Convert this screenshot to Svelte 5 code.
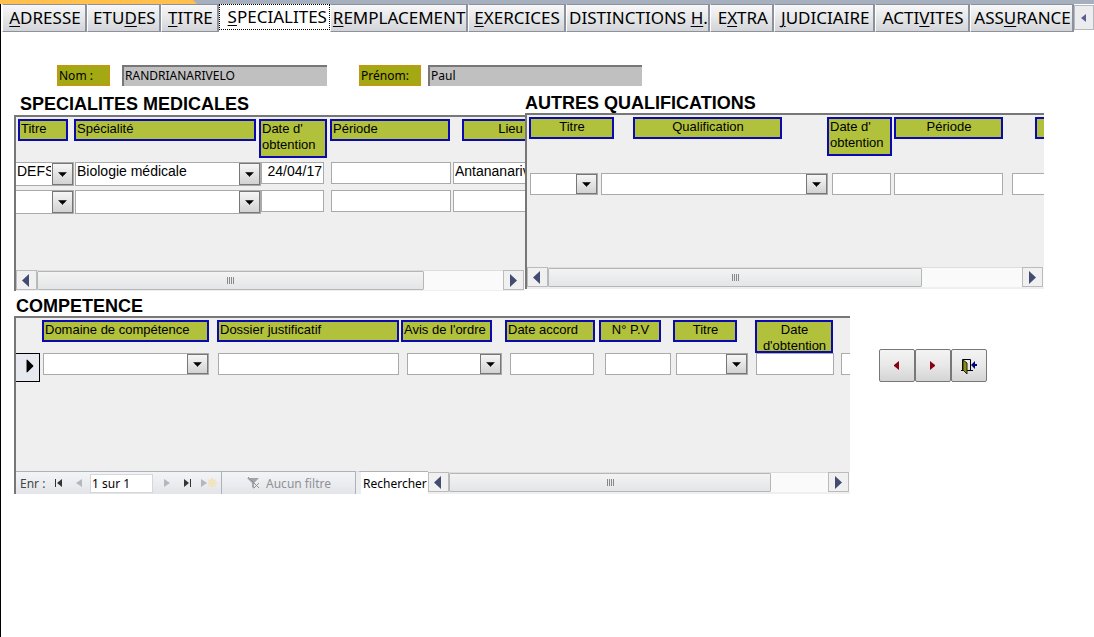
<script>
  // Tab captions: the character at index `key` is the keyboard mnemonic.
  const tabs = [
    { text: 'ADRESSE', key: 0, w: 85 },
    { text: 'ETUDES', key: 3, w: 74 },
    { text: 'TITRE', key: 0, w: 58 },
    { text: 'SPECIALITES', key: 0, w: 111 },
    { text: 'REMPLACEMENT', key: 0, w: 138 },
    { text: 'EXERCICES', key: 0, w: 98 },
    { text: 'DISTINCTIONS H.', key: 13, w: 145 },
    { text: 'EXTRA', key: 1, w: 64 },
    { text: 'JUDICIAIRE', key: 0, w: 101 },
    { text: 'ACTIVITES', key: 4, w: 95 },
    { text: 'ASSURANCE', key: 3, w: 104 }
  ];
  let active = $state(3);

  // w is the width of a box, gap the room left before it.
  const specialites = {
    id: 'spec',
    heads: [
      { text: 'Titre', w: 50, gap: 2 },
      { text: 'Spécialité', w: 182, gap: 6 },
      { text: "Date d' obtention", w: 68, gap: 3, tall: true },
      { text: 'Période', w: 120, gap: 3 },
      { text: 'Lieu', w: 96, gap: 12, center: true }
    ],
    rows: [
      [
        { label: 'Titre', value: 'DEFS', combo: true, w: 58, gap: 0, open: true },
        { label: 'Spécialité', value: 'Biologie médicale', combo: true, w: 186, gap: 1 },
        { label: "Date d'obtention", value: '24/04/17', w: 63, gap: 0, right: true },
        { label: 'Période', value: '', w: 120, gap: 7 },
        { label: 'Lieu', value: 'Antananarivo', w: 110, gap: 2 }
      ],
      [
        { label: 'Titre', value: '', combo: true, w: 58, gap: 0, open: true },
        { label: 'Spécialité', value: '', combo: true, w: 186, gap: 1 },
        { label: "Date d'obtention", value: '', w: 63, gap: 0 },
        { label: 'Période', value: '', w: 120, gap: 7 },
        { label: 'Lieu', value: '', w: 110, gap: 2 }
      ]
    ]
  };
  const qualifications = {
    id: 'qual',
    heads: [
      { text: 'Titre', w: 85, gap: 2, center: true },
      { text: 'Qualification', w: 149, gap: 19, center: true },
      { text: "Date d' obtention", w: 65, gap: 45, tall: true },
      { text: 'Période', w: 109, gap: 2, center: true },
      { text: '', w: 80, gap: 32 }
    ],
    rows: [
      [
        { label: 'Titre', value: '', combo: true, w: 68, gap: 3 },
        { label: 'Qualification', value: '', combo: true, w: 227, gap: 3 },
        { label: "Date d'obtention", value: '', w: 59, gap: 4 },
        { label: 'Période', value: '', w: 109, gap: 3 },
        { label: 'Lieu', value: '', w: 90, gap: 9 }
      ]
    ]
  };
  const competence = {
    id: 'comp',
    heads: [
      { text: 'Domaine de compétence', w: 167, gap: 26 },
      { text: 'Dossier justificatif', w: 182, gap: 8 },
      { text: "Avis de l'ordre", w: 91, gap: 2 },
      { text: 'Date accord', w: 90, gap: 13 },
      { text: 'N° P.V', w: 62, gap: 4, center: true },
      { text: 'Titre', w: 64, gap: 12, center: true },
      { text: "Date d'obtention", w: 78, gap: 18, center: true, tall: true }
    ],
    rows: [
      [
        { label: 'Domaine de compétence', value: '', combo: true, w: 166, gap: 3 },
        { label: 'Dossier justificatif', value: '', w: 181, gap: 9 },
        { label: "Avis de l'ordre", value: '', combo: true, w: 95, gap: 8 },
        { label: 'Date accord', value: '', w: 84, gap: 8 },
        { label: 'N° P.V', value: '', w: 66, gap: 11 },
        { label: 'Titre', value: '', combo: true, w: 72, gap: 5 },
        { label: "Date d'obtention", value: '', w: 78, gap: 8 },
        { label: 'Lieu', value: '', w: 80, gap: 7 }
      ]
    ]
  };
</script>

{#snippet box(c)}
  {#if c.combo}
    <span class="combo" class:open={c.open}>
      <select aria-label={c.label}>
        <option>{c.value}</option>
      </select>
      <svg class="drop" viewBox="0 0 21 20" aria-hidden="true"><path d="M6 8h9v1h-1v1h-1v1h-1v1h-1v1h-1v-1h-1v-1h-1v-1h-1v-1h-1z" /></svg>
    </span>
  {:else}
    <input class="field" class:right={c.right} type="text" aria-label={c.label} value={c.value} />
  {/if}
{/snippet}

{#snippet sheet(s)}
  <table class="sheet {s.id}">
    <thead>
      <tr>
        {#each s.heads as h}
          <th
            class:center={h.center}
            class:tall={h.tall}
            style="width:{h.w}px;margin-left:{h.gap}px">{h.text}</th>
        {/each}
      </tr>
    </thead>
    <tbody>
      {#each s.rows as row}
        <tr>
          {#if s.id === 'comp'}
            <td class="selector">
              <button aria-label="Enregistrement actif">
                <svg viewBox="0 0 24 27"><path d="M11 5h1l1 1 1 1 4 4v1l-4 4-2 2h-1z" /></svg>
              </button>
            </td>
          {/if}
          {#each row as c}
            <td style="width:{c.w}px;margin-left:{c.gap}px">{@render box(c)}</td>
          {/each}
        </tr>
      {/each}
    </tbody>
  </table>
{/snippet}

{#snippet scroller(size)}
  <div class="scroller">
    <button class="arrow" aria-label="Défiler à gauche">
      <svg viewBox="0 0 19 17"><path d="M12 2v13L5 8.500z" /></svg>
    </button>
    <div class="track">
      <div class="thumb" style="width:{size}%"><i></i><i></i><i></i><i></i></div>
    </div>
    <button class="arrow" aria-label="Défiler à droite">
      <svg viewBox="0 0 19 17"><path d="M6 2v13l7-6.500z" /></svg>
    </button>
  </div>
{/snippet}

<div class="strip"><div class="accent"></div></div>
<div class="page">
  <nav class="tabs" role="tablist">
    {#each tabs as t, i}
      <button
        class="tab"
        class:active={active === i}
        role="tab"
        aria-selected={active === i}
        style="flex:1 1 {t.w}px"
        onclick={() => (active = i)}>{t.text.slice(0, t.key)}<u>{t.text[t.key]}</u>{t.text.slice(t.key + 1)}</button>
    {/each}
    <button class="more" aria-label="Onglets précédents">
      <svg viewBox="0 0 6 8"><path d="M5 0v8L0 4z" /></svg>
    </button>
  </nav>

  <form class="person" onsubmit={(e) => e.preventDefault()}>
    <label for="nom">Nom :</label>
    <input id="nom" type="text" value="RANDRIANARIVELO" readonly />
    <label class="second" for="prenom">Prénom:</label>
    <input id="prenom" type="text" value="Paul" readonly />
  </form>

  <div class="pair">
    <section class="left">
      <h2>SPECIALITES MEDICALES</h2>
      <div class="panel">
        {@render sheet(specialites)}
        {@render scroller(83)}
      </div>
    </section>
    <section>
      <h2>AUTRES QUALIFICATIONS</h2>
      <div class="panel">
        {@render sheet(qualifications)}
        {@render scroller(79)}
      </div>
    </section>
  </div>

  <div class="lower">
    <section class="wide">
      <h2>COMPETENCE</h2>
      <div class="panel">
        {@render sheet(competence)}
        <div class="foot">
          <div class="records">
            <span class="enr">Enr :</span>
            <button aria-label="Premier"><svg viewBox="0 0 10 10"><path d="M1 1h1v8H1zM8 1v8L3 5z" /></svg></button>
            <button class="dim" aria-label="Précédent"><svg viewBox="0 0 10 10"><path d="M7 1v8L1 5z" /></svg></button>
            <input class="pos" type="text" aria-label="Enregistrement" value="1 sur 1" />
            <button class="dim" aria-label="Suivant"><svg viewBox="0 0 10 10"><path d="M2 1v8l6-4z" /></svg></button>
            <button aria-label="Dernier"><svg viewBox="0 0 10 10"><path d="M1 1v8l5-4zM7 1h1v8H7z" /></svg></button>
            <button class="dim new" aria-label="Nouveau"><svg viewBox="0 0 16 10"><path d="M0 1v8l6-4z" /><path class="spark" d="M10 0h2v2l2-1 1 1-1 2h2v2h-2l1 2-1 1-2-1v2h-2V8L8 9 7 8l1-2H7V4h1L7 2l1-1 2 1z" /></svg></button>
          </div>
          <button class="filter" disabled>
            <svg viewBox="0 0 14 14"><path d="M1 2h12L8 7v6L6 11V7z" /><path class="cross" d="M2 1l11 11M13 7l-5 5" /></svg>
            Aucun filtre
          </button>
          <input class="find" type="text" aria-label="Rechercher" value="Rechercher" />
          {@render scroller(85)}
        </div>
      </div>
    </section>
    <div class="actions">
      <button aria-label="Fiche précédente"><svg viewBox="0 0 20 20"><path class="red" d="M12 5v9L7 10V9z" /></svg></button>
      <button aria-label="Fiche suivante"><svg viewBox="0 0 20 20"><path class="red" d="M7 5v9l5-4V9z" /></svg></button>
      <button aria-label="Fermer">
        <svg viewBox="0 0 20 20">
          <path d="M3.500 14V3.500h8V14.500M2 14.500h3M8 14.500h6" fill="none" stroke="#000" />
          <path d="M4 4l4 3v11l-4-4z" fill="#8c8c1c" stroke="#222200" />
          <path class="blue" d="M12 9l4-4v3h2v2h-2v3z" />
        </svg>
      </button>
    </div>
  </div>
</div>

<style>
  :global(body) {
    background: #fff;
    color: #000;
    font-family: 'Liberation Sans', Arial, sans-serif;
    font-size: 14px;
  }
  :global(*) {
    box-sizing: border-box;
  }
  button,
  input,
  select {
    margin: 0;
    padding: 0;
    border: 0;
    border-radius: 0;
    font: inherit;
    color: inherit;
    min-width: 0;
  }
  svg {
    display: block;
  }

  .strip {
    height: 4px;
    background: #a5afbd;
  }
  .accent {
    width: 18%;
    height: 4px;
    background: #ffc04e;
    clip-path: polygon(0 0, 98% 0, 100% 100%, 0 100%);
  }
  .page {
    min-height: calc(100vh - 4px);
    border-left: 1px solid #000;
    overflow: hidden;
  }

  .tabs {
    display: flex;
    height: 28px;
    padding-left: 1px;
    font: 17px 'Noto Sans', Tahoma, sans-serif;
  }
  .tab {
    height: 28px;
    padding-left: 2px;
    border: 1px solid #8c919b;
    border-left-color: #fff;
    border-right-width: 2px;
    background: linear-gradient(#f7f7f8, #e6e7e9 50%, #d3d4d8);
    white-space: nowrap;
    line-height: 26px;
  }
  .tab.active {
    height: 26px;
    padding-left: 6px;
    background: #fff;
    border: 1px dotted #000;
    line-height: 22px;
  }
  u {
    text-decoration-thickness: 1px;
    text-underline-offset: 2px;
  }
  .more {
    width: 20px;
    height: 25px;
    margin-top: 1px;
    border: 1px solid #b5b8bf;
    background: #ececef;
    display: grid;
    place-items: center;
  }
  .more svg {
    width: 6px;
    fill: #5c5c96;
  }

  .person {
    display: flex;
    height: 21px;
    margin: 33px 0 0 56px;
    font: 12px 'Noto Sans', Tahoma, sans-serif;
  }
  .person label {
    width: 53px;
    height: 21px;
    padding-left: 1px;
    border: 1px solid #d09010;
    background: #a3a912;
    line-height: 20px;
    margin-right: 12px;
  }
  .person .second {
    width: 62px;
    margin-left: 32px;
    margin-right: 7px;
  }
  .person input {
    width: 205px;
    padding: 0 0 2px 1px;
    border: solid #777;
    border-width: 2px 0 0 2px;
    background: #c0c0c0;
  }
  .person #prenom {
    width: 214px;
  }

  .pair {
    display: grid;
    grid-template-columns: 511fr 519fr;
    margin: 7px 50px 0 13px;
  }
  .left {
    padding-top: 1px;
  }
  .left h2 {
    padding-left: 6px;
    height: 21px;
  }
  h2 {
    margin: 0;
    height: 20px;
    font-size: 18px;
    line-height: 20px;
    font-weight: bold;
    white-space: nowrap;
  }
  section {
    min-width: 0;
  }
  .panel {
    display: flex;
    flex-direction: column;
    min-height: 176px;
    padding-bottom: 2px;
    border: solid #777;
    border-width: 2px 0 0 2px;
    background: #efefef;
    overflow: hidden;
  }
  .left .panel {
    padding-bottom: 1px;
  }

  .sheet {
    display: block;
    flex: 1;
    padding-top: 2px;
    overflow: hidden;
  }
  thead,
  tbody {
    display: block;
  }
  tr {
    display: flex;
    align-items: flex-start;
  }
  thead tr {
    height: 43px;
  }
  .qual thead tr {
    height: 56px;
  }
  .comp thead tr {
    height: 33px;
  }
  tbody tr {
    height: 28px;
  }
  th,
  td {
    display: block;
    flex: none;
    padding: 0;
  }
  th {
    height: 22px;
    border: 2px solid #0a0ab0;
    background: #b1c13c;
    padding-left: 1px;
    font-weight: normal;
    font-size: 13px;
    line-height: 16px;
    text-align: left;
    overflow: hidden;
    white-space: nowrap;
  }
  th.center {
    text-align: center;
  }
  th.tall {
    height: 39px;
    white-space: normal;
  }
  .comp th.tall {
    height: 33px;
  }
  td {
    height: 22px;
  }
  .field,
  .combo {
    width: 100%;
    height: 22px;
    border: 1px solid #aaa;
    background: #fff;
  }
  .field {
    display: block;
    padding: 0 1px 4px;
  }
  .field.right {
    text-align: right;
  }
  .combo {
    display: grid;
  }
  .combo.open {
    border-left: 0;
  }
  .spec .combo {
    height: 24px;
  }
  .combo select,
  .drop {
    grid-area: 1 / 1;
  }
  .combo select {
    appearance: none;
    width: 100%;
    height: 16px;
    padding: 0 22px 0 1px;
    background: none;
    overflow: hidden;
  }
  .drop {
    justify-self: end;
    width: 21px;
    height: 100%;
    border: 1px solid #777;
    background: linear-gradient(#f6f6f6, #d2d2d2);
    pointer-events: none;
  }
  .selector {
    width: 24px;
  }
  .selector button {
    display: block;
    width: 24px;
    height: 29px;
    border: 1px solid #000;
    border-left: 0;
    background: #e6e9f0;
  }
  .comp tbody tr {
    height: 30px;
  }

  .scroller {
    display: flex;
    flex: none;
    height: 20px;
    padding-right: 1px;
    background: #fafafa;
  }
  .arrow {
    display: grid;
    place-items: center;
    width: 21px;
    height: 20px;
    border: 1px solid #bbb;
    background: #f0f0f1;
  }
  .arrow svg {
    width: 19px;
    fill: #414c70;
  }
  .track {
    flex: 1;
    border-top: 1px solid #ddd;
  }
  .thumb {
    display: flex;
    justify-content: center;
    align-items: center;
    gap: 1px;
    height: 19px;
    border: 1px solid #b5b7b7;
    border-radius: 1px;
    background: linear-gradient(#f3f3f3, #e4e5e7);
  }
  .thumb i {
    width: 1px;
    height: 7px;
    background: #888;
  }

  .lower {
    display: flex;
    align-items: flex-start;
    margin: 5px 107px 0 13px;
  }
  .wide {
    flex: 1;
  }
  .wide h2 {
    padding-left: 2px;
  }
  .wide .panel {
    min-height: 178px;
    padding-bottom: 0;
  }
  .foot {
    display: flex;
    height: 23px;
    font: 12px 'Noto Sans', Tahoma, sans-serif;
  }
  .foot .scroller {
    flex: 1;
    margin-top: 1px;
  }
  .records,
  .filter,
  .find {
    flex: none;
    border-top: 1px solid #aeb2b8;
    background: linear-gradient(#f3f4f6, #e3e5e9);
  }
  .records {
    display: flex;
    align-items: center;
    width: 206px;
    border-right: 1px solid #aeb2b8;
  }
  .enr {
    width: 32px;
    padding-left: 4px;
    color: #444;
    white-space: nowrap;
  }
  .records button {
    width: 21px;
    background: none;
    color: #333;
  }
  .records svg {
    width: 10px;
    height: 10px;
    margin: auto;
    fill: currentColor;
  }
  .records .dim {
    color: #b5b7bb;
  }
  .records .new svg {
    width: 16px;
  }
  .records .spark {
    fill: #f0e5c0;
  }
  .pos {
    width: 63px;
    height: 19px;
    margin-right: 3px;
    padding-left: 1px;
    border: 1px solid #d5d7da;
    background: #fff;
  }
  .filter {
    display: flex;
    align-items: center;
    justify-content: center;
    gap: 6px;
    width: 134px;
    border-right: 1px solid #aeb2b8;
    color: #8e9196;
  }
  .filter svg {
    width: 14px;
    fill: #a2a4a8;
  }
  .cross {
    stroke: #8e9094;
    stroke-width: 1;
  }
  .find {
    width: 72px;
    padding-left: 2px;
    border-left: 5px solid #ecedf0;
    background: #fff;
  }

  .actions {
    display: flex;
    margin: 53px 0 0 29px;
  }
  .actions button {
    display: grid;
    place-items: center;
    width: 36px;
    height: 33px;
    border: 1px solid #777;
    border-radius: 2px;
    background: linear-gradient(#f4f4f4, #e8e8e8 50%, #d4d4d4);
  }
  .actions svg {
    width: 20px;
    height: 20px;
  }
  .red {
    fill: #8b0010;
  }
  .blue {
    fill: #000080;
  }
</style>
